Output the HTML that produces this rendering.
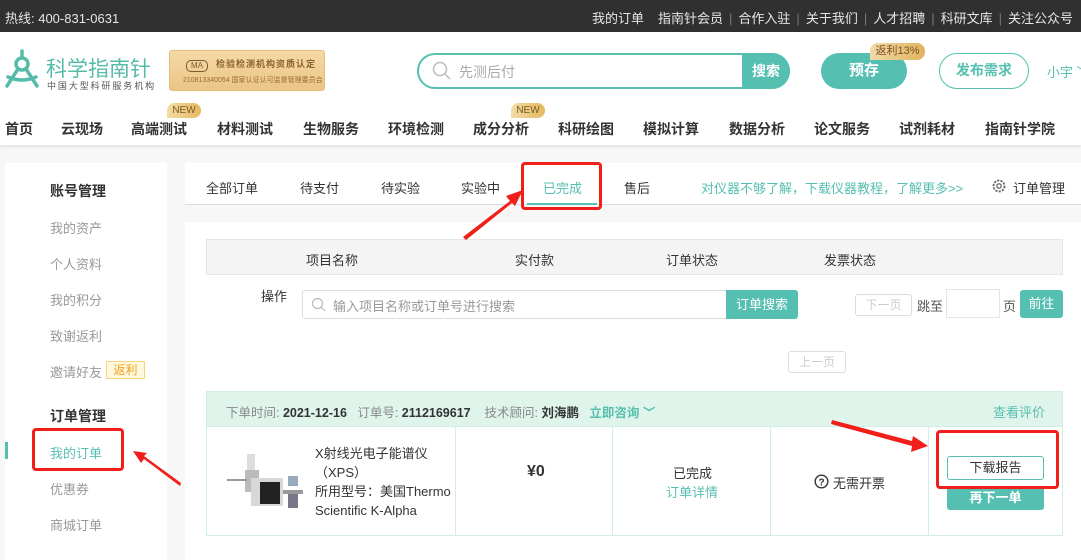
<!DOCTYPE html>
<html><head><meta charset="utf-8"><style>
*{margin:0;padding:0;box-sizing:border-box}
body{width:1081px;height:560px;overflow:hidden;background:#f7f7f7;font-family:"Liberation Sans","Noto Sans CJK SC",sans-serif;position:relative;color:#333}
.a{position:absolute;white-space:nowrap}
.top{left:0;top:0;width:1081px;height:32px;background:#2f302f;color:#e6e6e6;font-size:13px}
.top i{font-style:normal;color:#777;margin:0 6px}
.hdr{left:0;top:32px;width:1081px;height:113px;background:#fff;box-shadow:0 2px 3px rgba(0,0,0,.08)}
.nav{font-size:14px;font-weight:bold;color:#333;top:119px}
.new{width:34px;height:15px;background:linear-gradient(90deg,#f3dca6,#e4b860);border-radius:8px 8px 8px 0;font-size:10px;color:#7a5a20;text-align:center;line-height:15px;top:103px}
.side{left:5px;top:163px;width:162px;height:397px;background:#fff}
.sl{font-size:13px;color:#999;left:50px}
.sh{font-size:14px;font-weight:bold;color:#333;left:50px}
.tab{font-size:13px;color:#333;top:178px}
.red{border:3px solid #f01f1a;border-radius:4px}
.btn{background:#55bfb1;color:#fff;text-align:center}
.pg{border:1px solid #ddd;border-radius:3px;color:#ccc;font-size:12px;text-align:center;background:#fff}
.cell{top:427px;height:108px;border-left:1px solid #cfeee4}
</style></head><body>
<div class="a top">
 <span class="a" style="left:5px;top:8px">热线: 400-831-0631</span>
 <span class="a" style="left:592px;top:8px">我的订单</span>
 <span class="a" style="left:658px;top:8px">指南针会员<i>|</i>合作入驻<i>|</i>关于我们<i>|</i>人才招聘<i>|</i>科研文库<i>|</i>关注公众号</span>
</div>
<div class="a hdr"></div>
<svg class="a" style="left:4px;top:49px" width="36" height="40" viewBox="0 0 36 40"><g fill="none" stroke="#56bba9" stroke-width="3.5" stroke-linecap="round"><line x1="18" y1="2" x2="18" y2="8"/><circle cx="18" cy="15" r="6"/><line x1="14" y1="20" x2="3" y2="37"/><line x1="22" y1="20" x2="33" y2="37"/><path d="M4 28 Q18 34 32 28"/></g></svg>
<div class="a" style="left:46px;top:53px;font-size:21px;color:#56bba9">科学指南针</div>
<div class="a" style="left:47px;top:79px;font-size:9px;color:#555;letter-spacing:1.9px">中国大型科研服务机构</div>
<div class="a" style="left:169px;top:50px;width:156px;height:41px;background:linear-gradient(180deg,#f5d9a6,#eac587);border-radius:3px;border:1px solid #e6bd7a"></div>
<div class="a" style="left:186px;top:60px;width:22px;height:12px;border:1px solid #7a5a30;border-radius:5px;font-size:8px;color:#7a5a30;text-align:center;line-height:10px">MA</div>
<div class="a" style="left:216px;top:57px;font-size:9px;color:#8a5f2a;font-weight:bold;letter-spacing:1px">检验检测机构资质认定</div>
<div class="a" style="left:183px;top:75px;font-size:7px;color:#9a6a30">210813340054 国家认证认可监督管理委员会</div>
<div class="a" style="left:417px;top:53px;width:373px;height:36px;border:2px solid #56bfb0;border-radius:18px;background:#fff"></div>
<div class="a btn" style="left:742px;top:53px;width:48px;height:36px;border-radius:0 18px 18px 0;font-weight:bold;font-size:14px;line-height:36px">搜索</div>
<svg class="a" style="left:432px;top:61px" width="20" height="20"><circle cx="8" cy="8" r="6.5" fill="none" stroke="#bbb" stroke-width="1.5"/><line x1="13" y1="13" x2="18" y2="18" stroke="#bbb" stroke-width="1.5"/></svg>
<div class="a" style="left:459px;top:62px;font-size:14px;color:#aaa">先测后付</div>
<div class="a btn" style="left:821px;top:53px;width:86px;height:36px;border-radius:18px;font-weight:bold;font-size:15px;line-height:36px">预存</div>
<div class="a" style="left:870px;top:43px;width:55px;height:17px;background:linear-gradient(90deg,#f0d9a8,#e2b45e);border-radius:8px 8px 8px 0;font-size:11px;color:#7a5020;text-align:center;line-height:17px">返利13%</div>
<div class="a" style="left:939px;top:53px;width:90px;height:36px;border:1.5px solid #56bfb0;border-radius:18px;color:#56bfb0;font-weight:bold;font-size:14px;text-align:center;line-height:33px">发布需求</div>
<div class="a" style="left:1047px;top:62px;font-size:13px;color:#56bfb0">小宇 ﹀</div>
<div class="a new" style="left:167px">NEW</div>
<div class="a new" style="left:511px">NEW</div>
<span class="a nav" style="left:5px">首页</span><span class="a nav" style="left:61px">云现场</span><span class="a nav" style="left:131px">高端测试</span><span class="a nav" style="left:217px">材料测试</span><span class="a nav" style="left:303px">生物服务</span><span class="a nav" style="left:388px">环境检测</span><span class="a nav" style="left:473px">成分分析</span><span class="a nav" style="left:558px">科研绘图</span><span class="a nav" style="left:643px">模拟计算</span><span class="a nav" style="left:729px">数据分析</span><span class="a nav" style="left:814px">论文服务</span><span class="a nav" style="left:899px">试剂耗材</span><span class="a nav" style="left:985px">指南针学院</span>

<div class="a side"></div>
<span class="a sh" style="top:181px">账号管理</span>
<span class="a sl" style="top:218px">我的资产</span><span class="a sl" style="top:254px">个人资料</span><span class="a sl" style="top:290px">我的积分</span><span class="a sl" style="top:326px">致谢返利</span><span class="a sl" style="top:362px">邀请好友</span>
<div class="a" style="left:106px;top:361px;width:39px;height:18px;background:#fff8dc;border:1px solid #f3d77a;color:#f0a020;font-size:12px;text-align:center;line-height:16px">返利</div>
<span class="a sh" style="top:406px">订单管理</span>
<div class="a" style="left:5px;top:442px;width:3px;height:17px;background:#56bfb0"></div>
<span class="a sl" style="top:443px;color:#56bfb0">我的订单</span>
<span class="a sl" style="top:479px">优惠券</span><span class="a sl" style="top:515px">商城订单</span>
<div class="a red" style="left:32px;top:428px;width:92px;height:43px"></div>

<div class="a" style="left:185px;top:163px;width:896px;height:42px;background:#fff;border-bottom:1px solid #ddd"></div>
<span class="a tab" style="left:206px">全部订单</span><span class="a tab" style="left:300px">待支付</span><span class="a tab" style="left:381px">待实验</span><span class="a tab" style="left:461px">实验中</span><span class="a tab" style="left:543px;color:#56bfb0">已完成</span><span class="a tab" style="left:624px">售后</span>
<div class="a" style="left:527px;top:203px;width:70px;height:2px;background:#56bfb0"></div>
<span class="a tab" style="left:701px;color:#56bfb0">对仪器不够了解，下载仪器教程，了解更多&gt;&gt;</span>
<svg class="a" style="left:991px;top:178px" width="16" height="16"><circle cx="8" cy="8" r="5.5" fill="none" stroke="#666" stroke-width="1.8" stroke-dasharray="2.2 1.2"/><circle cx="8" cy="8" r="2.2" fill="none" stroke="#666" stroke-width="1.3"/></svg>
<span class="a tab" style="left:1013px">订单管理</span>
<div class="a red" style="left:521px;top:162px;width:81px;height:48px"></div>

<div class="a" style="left:185px;top:222px;width:896px;height:338px;background:#fff"></div>
<div class="a" style="left:206px;top:239px;width:857px;height:36px;background:#f4f4f4;border:1px solid #e5e5e5"></div>
<span class="a" style="left:306px;top:250px;font-size:13px">项目名称</span><span class="a" style="left:515px;top:250px;font-size:13px">实付款</span><span class="a" style="left:666px;top:250px;font-size:13px">订单状态</span><span class="a" style="left:824px;top:250px;font-size:13px">发票状态</span>
<span class="a" style="left:261px;top:286px;font-size:13px">操作</span>
<div class="a" style="left:302px;top:290px;width:430px;height:29px;border:1px solid #ddd;border-radius:3px"></div>
<svg class="a" style="left:311px;top:297px" width="16" height="16"><circle cx="6.5" cy="6.5" r="5" fill="none" stroke="#bbb" stroke-width="1.2"/><line x1="10" y1="10" x2="14" y2="14" stroke="#bbb" stroke-width="1.2"/></svg>
<span class="a" style="left:333px;top:296px;font-size:13px;color:#999">输入项目名称或订单号进行搜索</span>
<div class="a btn" style="left:726px;top:290px;width:72px;height:29px;border-radius:0 3px 3px 0;font-size:13px;line-height:29px">订单搜索</div>
<div class="a pg" style="left:855px;top:294px;width:57px;height:22px;line-height:20px">下一页</div>
<span class="a" style="left:917px;top:296px;font-size:13px;color:#555">跳至</span>
<div class="a" style="left:946px;top:289px;width:54px;height:29px;border:1px solid #e5e5e5"></div>
<span class="a" style="left:1003px;top:296px;font-size:13px;color:#555">页</span>
<div class="a btn" style="left:1020px;top:290px;width:43px;height:28px;border-radius:3px;font-size:13px;line-height:28px">前往</div>
<div class="a pg" style="left:788px;top:351px;width:58px;height:22px;line-height:20px">上一页</div>

<div class="a" style="left:206px;top:391px;width:857px;height:145px;border:1px solid #cfeee4;background:#fff"></div>
<div class="a" style="left:207px;top:392px;width:855px;height:35px;background:#dff4ea;border-bottom:1px solid #cfeee4"></div>
<span class="a" style="left:226px;top:402px;font-size:12.5px;color:#888">下单时间: <b style="color:#333">2021-12-16</b>&nbsp;&nbsp; 订单号: <b style="color:#333">2112169617</b>&nbsp;&nbsp;&nbsp; 技术顾问: <b style="color:#333">刘海鹏</b>&nbsp;&nbsp; <b style="color:#56bfb0">立即咨询 ﹀</b></span>
<span class="a" style="left:993px;top:402px;font-size:13px;color:#56bfb0">查看评价</span>
<div class="a cell" style="left:455px"></div><div class="a cell" style="left:612px"></div><div class="a cell" style="left:770px"></div><div class="a cell" style="left:928px"></div>
<svg class="a" style="left:225px;top:450px" width="80" height="60"><rect x="22" y="4" width="8" height="18" fill="#ddd"/><rect x="20" y="20" width="14" height="22" fill="#bbb"/><line x1="2" y1="30" x2="22" y2="30" stroke="#999" stroke-width="2"/><rect x="26" y="28" width="32" height="28" fill="#d8d8d8"/><rect x="35" y="32" width="20" height="22" fill="#222"/><rect x="58" y="40" width="20" height="4" fill="#999"/><rect x="63" y="44" width="10" height="14" fill="#778"/><rect x="63" y="26" width="10" height="10" fill="#9ab"/></svg>
<div class="a" style="left:315px;top:444px;font-size:13px;line-height:19px;color:#333">X射线光电子能谱仪<br>（XPS）<br>所用型号：美国Thermo<br>Scientific K-Alpha</div>
<span class="a" style="left:527px;top:463px;font-size:16px;font-weight:bold">¥0</span>
<span class="a" style="left:673px;top:463px;font-size:13px">已完成</span>
<span class="a" style="left:666px;top:482px;font-size:13px;color:#56bfb0">订单详情</span>
<svg class="a" style="left:814px;top:474px" width="15" height="15"><circle cx="7.5" cy="7.5" r="6.3" fill="none" stroke="#333" stroke-width="1.4"/><text x="7.5" y="11.5" font-size="10" text-anchor="middle" font-family="Liberation Sans" font-weight="bold" fill="#333">?</text></svg>
<span class="a" style="left:833px;top:473px;font-size:13px">无需开票</span>
<div class="a" style="left:947px;top:456px;width:97px;height:24px;border:1px solid #56bfb0;border-radius:3px;font-size:13px;text-align:center;line-height:22px;background:#fff">下载报告</div>
<div class="a btn" style="left:947px;top:486px;width:97px;height:24px;border-radius:0 0 3px 3px;font-size:13px;font-weight:bold;line-height:24px">再下一单</div>
<div class="a red" style="left:936px;top:430px;width:123px;height:59px"></div>

<svg class="a" style="left:0;top:0" width="1081" height="560"><g fill="#f01f1a">
<polygon points="463,237 510,201 506,196 523,190 515,206 512,203 466,240"/>
<polygon points="180,486 144,459 141,463 133,451 147,453 144,456 181,483"/>
<polygon points="832,420 912,441 913,436 928,446 911,452 912,446 831,424"/>
</g></svg>
</body></html>
